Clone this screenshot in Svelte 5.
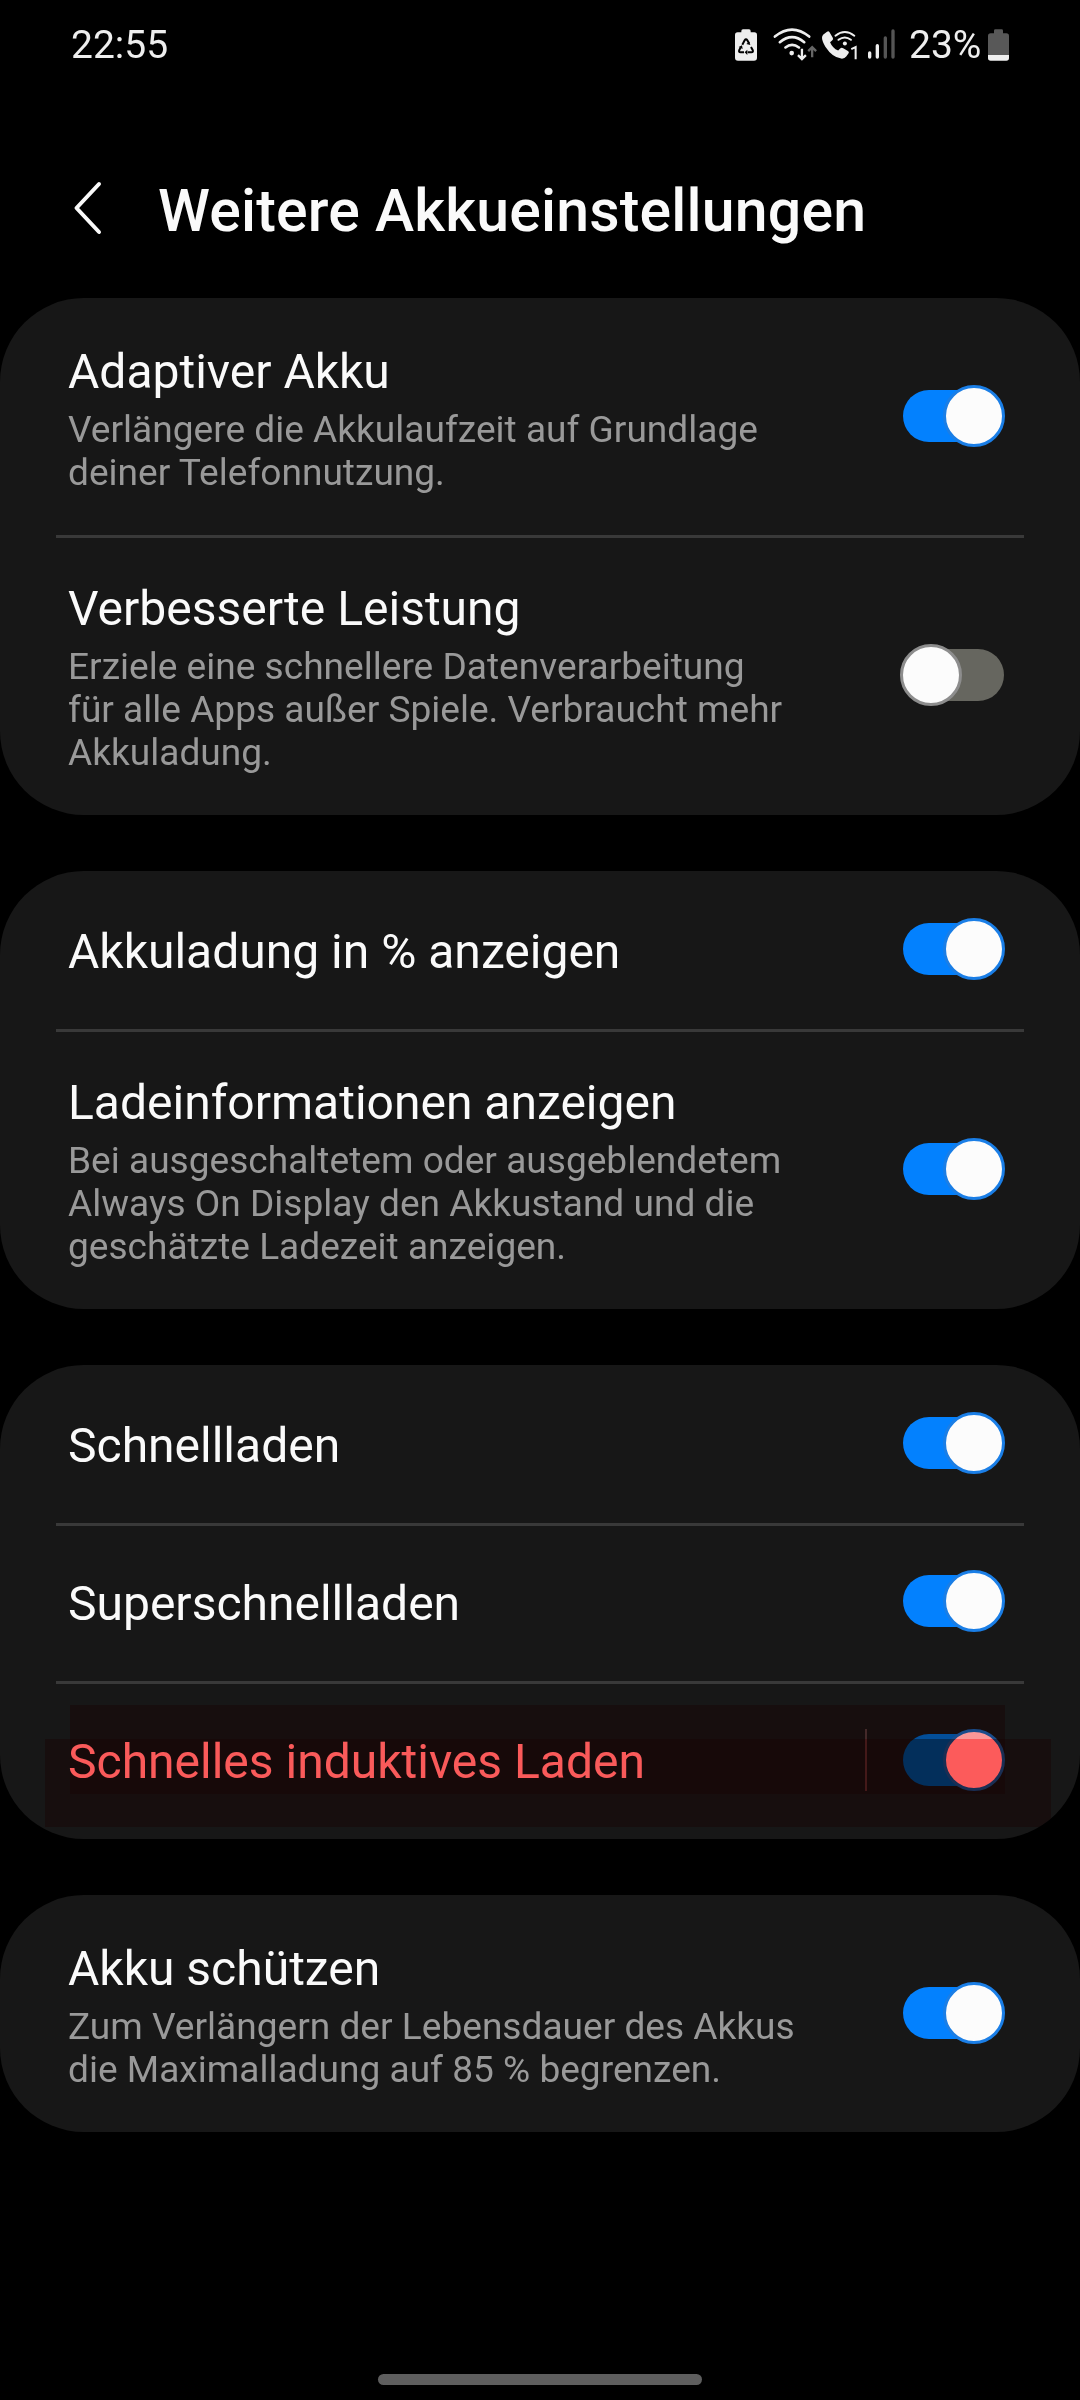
<script>
  const groups = [
    [
      {
        title: 'Adaptiver Akku',
        lines: ['Verlängere die Akkulaufzeit auf Grundlage', 'deiner Telefonnutzung.'],
        on: true
      },
      {
        title: 'Verbesserte Leistung',
        lines: [
          'Erziele eine schnellere Datenverarbeitung',
          'für alle Apps außer Spiele. Verbraucht mehr',
          'Akkuladung.'
        ],
        on: false
      }
    ],
    [
      { title: 'Akkuladung in % anzeigen', on: true },
      {
        title: 'Ladeinformationen anzeigen',
        lines: [
          'Bei ausgeschaltetem oder ausgeblendetem',
          'Always On Display den Akkustand und die',
          'geschätzte Ladezeit anzeigen.'
        ],
        on: true
      }
    ],
    [
      { title: 'Schnellladen', on: true },
      { title: 'Superschnellladen', on: true },
      { title: 'Schnelles induktives Laden', on: true, marked: true }
    ],
    [
      {
        title: 'Akku schützen',
        lines: ['Zum Verlängern der Lebensdauer des Akkus', 'die Maximalladung auf 85 % begrenzen.'],
        on: true
      }
    ]
  ];
</script>

<div class="screen">
  <header class="status">
    <span class="clock">22:55</span>
    <div class="indicators">
      <svg class="recycle" viewBox="0 0 66 96">
        <path d="M19 10V6q0-5 5-5h18q5 0 5 5v4h11q8 0 8 8v68q0 9-9 9H9q-9 0-9-9V18q0-8 8-8z" fill="#eee" />
        <g fill="none" stroke="#000" stroke-width="6" stroke-linejoin="round">
          <path d="M22 47l7-13q4-6 8 0l5 9" />
          <path d="M48 54l5 9q3 7-4 7H38" />
          <path d="M27 70H17q-7 0-4-7l4-8" />
        </g>
        <path d="M46 48l-12-3 9-7zM37 62v16l-8-8zM11 54l10-5 2 11z" fill="#000" />
      </svg>
      <svg class="wifi" viewBox="0 0 135 100">
        <g fill="none" stroke="#eee" stroke-width="8" stroke-linecap="round">
          <path d="M5 26Q57-16 109 26" />
          <path d="M20 43Q57 12 94 43" />
          <path d="M37 59Q57 43 78 59" />
        </g>
        <circle cx="56" cy="76" r="7" fill="#eee" />
        <path d="M87 63v29M75 82l12 12 12-12" fill="none" stroke="#eee" stroke-width="7" />
        <path d="M118 89V59M106 70l12-12 12 12" fill="none" stroke="#666" stroke-width="7" />
      </svg>
      <svg class="call" viewBox="0 0 110 86">
        <path d="M4 10L15 2q4-3 7 1l10 17q3 5-2 8l-6 5q7 17 24 25l6-6q4-4 9-1l14 8q5 3 2 7l-7 10q-5 7-15 6Q31 79 10 47 0 29 0 20q0-6 4-10z" fill="#eee" />
        <g fill="none" stroke="#eee" stroke-width="6" stroke-linecap="round">
          <path d="M40 14Q68-8 96 14" />
          <path d="M49 26Q68 12 86 26" />
        </g>
        <circle cx="68" cy="37" r="6" fill="#eee" />
        <path d="M87 54l13-6v36" fill="none" stroke="#eee" stroke-width="6" />
      </svg>
      <svg class="signal" viewBox="0 0 81 90">
        <g stroke-width="10" stroke-linecap="round">
          <path d="M5 72v12M28 50v34" stroke="#eee" />
          <path d="M52 27v57M75 6v78" stroke="#555" />
        </g>
      </svg>
      <span class="percent">23%</span>
      <svg class="battery" viewBox="0 0 63 96">
        <path d="M18 13V5q0-4 4-4h19q4 0 4 4v8h10q8 0 8 8v57H0V21q0-8 8-8z" fill="#585858" />
        <path d="M0 78h63v9q0 8-8 8H8q-8 0-8-8z" fill="#eee" />
      </svg>
    </div>
  </header>

  <div class="toolbar">
    <svg class="back" viewBox="0 0 30 54">
      <path d="M26 3L3.5 27 26 51" fill="none" stroke="#fafafa" stroke-width="4" stroke-linecap="round" stroke-linejoin="round" />
    </svg>
    <h1>Weitere Akkueinstellungen</h1>
  </div>

  <main>
    {#each groups as group}
      <section class="card">
        {#each group as item}
          <div class="row" class:detailed={item.lines} class:marked={item.marked}>
            <div class="text">
              <div class="title">{item.title}</div>
              {#if item.lines}
                <div class="summary">
                  {#each item.lines as line}<div>{line}</div>{/each}
                </div>
              {/if}
            </div>
            {#if item.marked}<span class="separator"></span>{/if}
            <div class="switch" class:on={item.on}><span class="thumb"></span></div>
            {#if item.marked}
              <span class="marker upper"></span>
              <span class="marker lower"></span>
            {/if}
          </div>
        {/each}
      </section>
    {/each}
  </main>

  <div class="handle"></div>
</div>

<style>
  :global(body) {
    margin: 0;
    background: #000;
  }
  .screen {
    box-sizing: border-box;
    width: 1080px;
    height: 2400px;
    display: flex;
    flex-direction: column;
    background: #000;
    color: #fafafa;
    font-family: Roboto, sans-serif;
    overflow: hidden;
  }
  svg {
    display: block;
    flex: none;
    overflow: visible;
  }
  .status {
    box-sizing: border-box;
    height: 90px;
    padding: 0 71px;
    display: flex;
    justify-content: space-between;
    color: #eee;
    font-size: 39px;
    line-height: 90px;
  }
  .clock,
  .percent {
    white-space: nowrap;
  }
  .percent {
    width: 73px;
  }
  .indicators {
    display: flex;
    align-items: flex-start;
  }
  .recycle {
    width: 22px;
    height: 32px;
    margin: 29px 16px 0 0;
  }
  .wifi {
    width: 45px;
    height: 33px;
    margin: 28px 4px 0 0;
  }
  .call {
    width: 37px;
    height: 29px;
    margin: 31px 9px 0 0;
  }
  .signal {
    width: 27px;
    height: 30px;
    margin: 29px 14px 0 0;
  }
  .battery {
    width: 21px;
    height: 32px;
    margin: 29px 0 0 6px;
  }
  .toolbar {
    height: 208px;
    display: flex;
    align-items: flex-start;
    padding-left: 73px;
  }
  .back {
    width: 30px;
    height: 54px;
    margin-top: 91px;
  }
  h1 {
    margin: 86px 0 0 55px;
    font-size: 59px;
    font-weight: 500;
    letter-spacing: 0.18px;
    line-height: 70px;
    white-space: nowrap;
  }
  main {
    display: flex;
    flex-direction: column;
    gap: 56px;
  }
  .card {
    border-radius: 84px;
    background: #171717;
  }
  .row {
    box-sizing: border-box;
    position: relative;
    height: 158px;
    padding: 0 75px 0 68px;
    display: flex;
    align-items: center;
  }
  .row + .row::before {
    content: '';
    position: absolute;
    top: 0;
    left: 56px;
    right: 56px;
    height: 3px;
    background: #393939;
  }
  .detailed {
    height: auto;
    padding-top: 46px;
    padding-bottom: 41px;
  }
  .text {
    flex: 1;
    white-space: nowrap;
  }
  .title {
    font-size: 48px;
    line-height: 56px;
  }
  .row:not(.detailed) .title {
    padding-top: 4px;
  }
  .summary {
    padding-top: 8px;
    color: #999;
    font-size: 37.1px;
    line-height: 43px;
  }
  .separator {
    width: 2px;
    height: 62px;
    margin-right: 33px;
    background: #444;
  }
  .switch {
    box-sizing: border-box;
    position: relative;
    width: 105px;
    height: 62px;
    margin-bottom: 2px;
    display: flex;
    align-items: center;
  }
  .marked .switch {
    margin-bottom: 0;
  }
  .detailed .switch {
    margin-bottom: 5.2px;
  }
  .switch::before {
    content: '';
    position: absolute;
    left: 3px;
    top: 5px;
    width: 101px;
    height: 52px;
    border-radius: 26px;
    background: #66665f;
  }
  .switch.on {
    justify-content: flex-end;
  }
  .switch.on::before {
    background: #0381fe;
  }
  .thumb {
    box-sizing: border-box;
    position: relative;
    width: 62px;
    height: 62px;
    border: 3px solid #8d8d8d;
    border-radius: 50%;
    background: #fcfcfc;
  }
  .on .thumb {
    border-color: #1a7ee6;
  }
  .marker {
    position: absolute;
    background: #ff9999;
    mix-blend-mode: multiply;
  }
  .upper {
    left: 70px;
    right: 75px;
    top: 24px;
    height: 89px;
  }
  .lower {
    left: 45px;
    right: 29px;
    top: 58px;
    height: 88px;
  }
  .handle {
    width: 324px;
    height: 11px;
    margin: auto auto 15px;
    border-radius: 6px;
    background: #5e5e5e;
  }
</style>
